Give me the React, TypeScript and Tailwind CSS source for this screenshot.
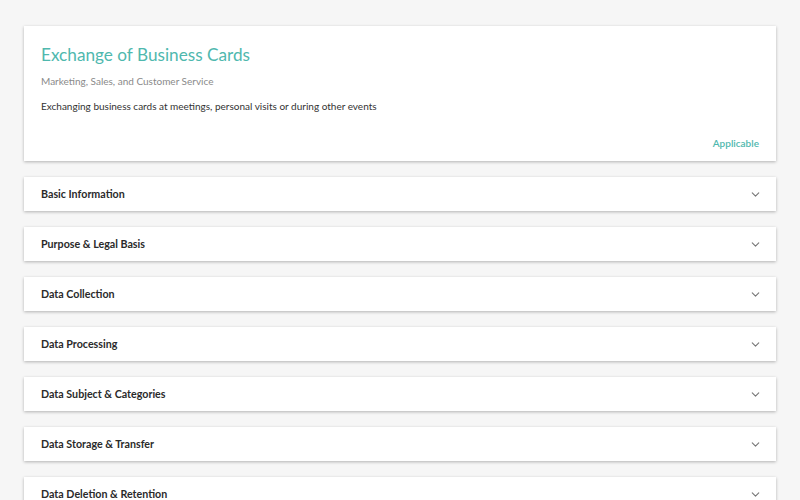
import { ChevronDown } from 'lucide-react';

const sections = [
  'Basic Information',
  'Purpose & Legal Basis',
  'Data Collection',
  'Data Processing',
  'Data Subject & Categories',
  'Data Storage & Transfer',
  'Data Deletion & Retention',
];

export default function App() {
  return (
    <div
      className="min-h-[500px] bg-[#f6f6f6] px-6 pt-[26px] text-[#333]"
      style={{ fontFamily: 'Lato, "Noto Sans", sans-serif' }}
    >
      <div className="flex flex-col bg-white px-[17px] pb-[11px] pt-[16px] shadow-[0_1px_3px_rgba(0,0,0,0.28)]">
        <h1 className="text-[17.2px] leading-[26px] text-[#4fb8ae]">Exchange of Business Cards</h1>
        <div className="mt-[6px] text-[10px] leading-[14px] text-[#8a8a8a]">
          Marketing, Sales, and Customer Service
        </div>
        <div className="mt-[11px] text-[10px] leading-[14px] text-[#333]">
          Exchanging business cards at meetings, personal visits or during other events
        </div>
        <div className="mt-[23px] self-end text-[10px] font-semibold leading-[14px] text-[#4fb8ae]">
          Applicable
        </div>
      </div>

      <div className="mt-[16px] flex flex-col gap-[16px]">
        {sections.map((title) => (
          <div
            key={title}
            className="flex h-[34px] items-center justify-between bg-white pl-[17px] pr-[14px] shadow-[0_1px_3px_rgba(0,0,0,0.28)]"
          >
            <span className="text-[10.7px] font-bold text-[#2a2a2a]">{title}</span>
            <ChevronDown className="h-[13px] w-[13px] text-[#777]" strokeWidth={2} />
          </div>
        ))}
      </div>
    </div>
  );
}
